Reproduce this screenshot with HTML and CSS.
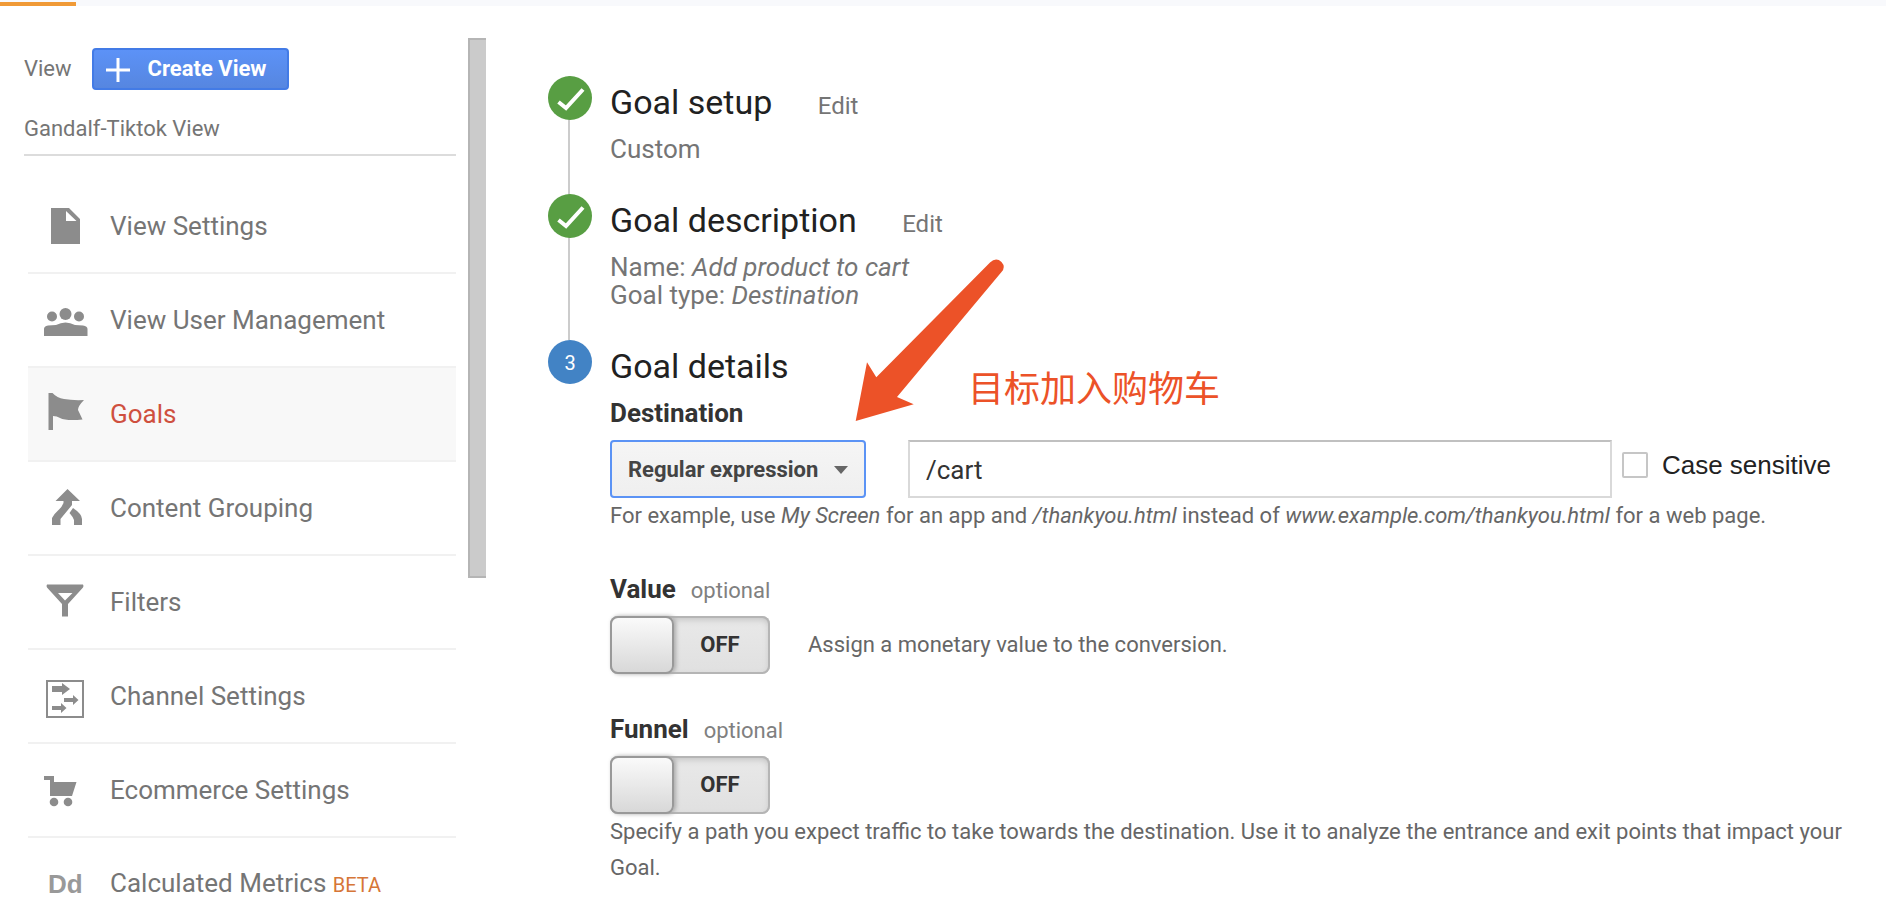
FILE: index.html
```html
<!DOCTYPE html>
<html lang="en">
<head>
<meta charset="utf-8">
<title>Goal settings</title>
<link rel="stylesheet" href="styles.css">
</head>
<body>
<div class="topbar"><div class="topbar-active"></div></div>
<div class="page">
  <aside class="sidebar">
    <div class="view-head">
      <span>View</span>
      <button class="create" type="button">
        <svg class="plus" viewBox="0 0 24 24" aria-hidden="true"><path d="M12 0v24M0 12h24"/></svg>
        Create View
      </button>
    </div>
    <div class="view-name">Gandalf-Tiktok View</div>
    <nav class="menu">
      <a class="item" href="#"><svg class="icon" viewBox="0 0 48 48"><path fill-rule="evenodd" d="M11 6H29L40 17V42H11ZM26 9V19H36.500Z"/></svg>View Settings</a>
      <a class="item" href="#"><svg class="icon" viewBox="0 0 48 48"><circle cx="12" cy="20.500" r="5"/><circle cx="25.500" cy="18" r="6"/><circle cx="39" cy="20.500" r="5"/><path d="M4 40V33Q4 30 8 29.500L16 29Q25.500 24 35 29L43 29.500Q47.500 30 47.500 33V40Z"/></svg>View User Management</a>
      <a class="item current" href="#"><svg class="icon" viewBox="0 0 48 48"><path d="M8.500 3H12.500Q17 8 24 9Q32 10.500 44 10Q38 16 38 20Q40 24 42.500 29.500Q26 31 20 28Q17 26 13 26V40H8.500Z"/></svg>Goals</a>
      <a class="item" href="#"><svg class="icon" viewBox="0 0 48 48"><path d="M27.500 5L40 17H32V21L20.500 35V41H12V34Q14 30 18 26.500Q22 23 23.500 19V17H15.500Z"/><path d="M33 24Q42 30 42 35V41H34V36Q33 33 29.500 29Z"/></svg>Content Grouping</a>
      <a class="item" href="#"><svg class="icon" viewBox="0 0 48 48"><path fill-rule="evenodd" d="M7 6.500H43Q44 8 43 9.500L28 26V38.500H22V26L7 9.500Q6 8 7 6.500ZM18 15L25 22.500L32.500 15Z"/></svg>Filters</a>
      <a class="item" href="#"><svg class="icon" viewBox="0 0 48 48"><path fill-rule="evenodd" d="M6 8H44V46H6ZM8 10V44H42V10Z"/><path d="M12 14H22V11L30 17L22 23V20H12ZM24 26H33V23L38.500 28L33 33V30H24ZM12 34H21V31L26.500 36L21 41V38H12Z"/></svg>Channel Settings</a>
      <a class="item" href="#"><svg class="icon" viewBox="0 0 48 48"><path d="M4 10H14V16H36.500L32 30H10V14H4Z"/><circle cx="14" cy="36" r="4.300"/><circle cx="28" cy="36" r="4.300"/></svg>Ecommerce Settings</a>
      <a class="item" href="#"><span class="icon dd">Dd</span><span>Calculated Metrics <span class="beta">BETA</span></span></a>
    </nav>
  </aside>
  <div class="scrollbar"></div>

  <main class="main">
    <section class="step">
      <div class="rail"><span class="badge"><svg viewBox="0 0 44 44" aria-label="Done"><path d="M10.500 26L18 32L35 13.500"/></svg></span></div>
      <div class="body">
        <h2>Goal setup <a class="edit" href="#">Edit</a></h2>
        <p class="summary">Custom</p>
      </div>
    </section>
    <section class="step">
      <div class="rail"><span class="badge"><svg viewBox="0 0 44 44" aria-label="Done"><path d="M10.500 26L18 32L35 13.500"/></svg></span></div>
      <div class="body">
        <h2>Goal description <a class="edit" href="#">Edit</a></h2>
        <p class="summary">Name: <i>Add product to cart</i><br>Goal type: <i>Destination</i></p>
      </div>
    </section>
    <section class="step">
      <div class="rail last"><span class="badge active">3</span></div>
      <div class="body">
        <h2>Goal details</h2>
        <div class="field">
          <label class="title" for="match">Destination</label>
          <div class="row">
            <div class="picker">
              <select id="match"><option>Regular expression</option><option>Equals to</option><option>Begins with</option></select>
              <svg class="caret" viewBox="0 0 14 8" aria-hidden="true"><path d="M0 0H14L7 8Z"/></svg>
            </div>
            <input class="url" type="text" value="/cart" aria-label="Destination">
            <label class="case"><input type="checkbox">Case sensitive</label>
          </div>
          <p class="help">For example, use <i>My Screen</i> for an app and <i>/thankyou.html</i> instead of <i>www.example.com/thankyou.html</i> for a web page.</p>
        </div>
        <div class="field">
          <label class="title" for="value">Value<span class="optional">optional</span></label>
          <div class="row">
            <label class="toggle"><input id="value" type="checkbox"><span>OFF</span></label>
            <span class="note">Assign a monetary value to the conversion.</span>
          </div>
        </div>
        <div class="field">
          <label class="title" for="funnel">Funnel<span class="optional">optional</span></label>
          <div class="row">
            <label class="toggle"><input id="funnel" type="checkbox"><span>OFF</span></label>
          </div>
          <p class="help">Specify a path you expect traffic to take towards the destination. Use it to analyze the entrance and exit points that impact your Goal.</p>
        </div>
      </div>
    </section>
    <svg class="arrow" viewBox="0 0 150 164" aria-hidden="true"><path d="M0.700 163L12 104.300L21.300 119.300L135 4.500Q141 -1 146.500 4Q151 9 146.500 14L42 139L58.700 146.300Z"/></svg>
    <div class="callout" lang="zh">目标加入购物车</div>
  </main>
</div>
</body>
</html>
```
FILE: styles.css
```css
* { box-sizing: border-box; }
body {
  margin: 0;
  background: #fff;
  color: #757575;
  font-family: Roboto, "Noto Sans CJK SC", sans-serif;
  font-size: 26px;
  line-height: 28px;
}
a { color: inherit; text-decoration: none; }
h2, p { margin: 0; }
button, input, select { font-family: inherit; }

.topbar { height: 6px; padding-top: 2px; background: #f8f9fc; }
.topbar-active { width: 76px; height: 4px; background: #f09a37; }

.page { display: flex; align-items: flex-start; }

.sidebar { width: 456px; flex: none; padding: 42px 0 0 24px; font-size: 22px; }
.view-head { display: flex; align-items: center; gap: 20px; }
.create {
  display: flex;
  align-items: center;
  gap: 18px;
  height: 42px;
  padding: 0 20px 2px 12px;
  border: 2px solid #437be6;
  border-radius: 4px;
  background: linear-gradient(#5c92f7, #5686e0);
  color: #fff;
  font-size: 22px;
  font-weight: 700;
}
.plus { width: 24px; height: 24px; margin-top: 4px; fill: none; stroke: #fff; stroke-width: 3; }
.view-name { height: 66px; padding-top: 25px; border-bottom: 2px solid #dcdcdc; }
.menu { margin: 24px 0 0 4px; font-size: 26px; }
.item {
  display: flex;
  align-items: center;
  gap: 22px;
  height: 94px;
  padding-left: 12px;
  border-bottom: 2px solid #f1f1f1;
}
.item:last-child { border-bottom: 0; height: 92px; }
.current { background: #f8f8f8; color: #cf503f; }
.icon { width: 48px; height: 48px; flex: none; fill: #8c8c8c; }
.dd {
  padding-left: 8px;
  line-height: 48px;
  color: #999;
  font-family: "Liberation Sans", sans-serif;
  font-weight: 700;
}
.beta { color: #d67638; font-size: 20px; }

.scrollbar {
  width: 18px;
  height: 540px;
  flex: none;
  margin: 32px 0 0 12px;
  background: #cbcbcb;
  border: 2px solid #b5b5b5;
  border-right: 0;
}

.main { position: relative; flex: 1; min-width: 0; padding: 70px 36px 0 62px; }
.step { display: flex; gap: 18px; }
.rail {
  width: 44px;
  flex: none;
  background: linear-gradient(#ccc, #ccc) 20px 0 / 2px 100% no-repeat;
}
.last { background: none; }
.badge {
  display: block;
  width: 44px;
  height: 44px;
  border-radius: 50%;
  background: #589e43;
}
.badge svg { display: block; fill: none; stroke: #fff; stroke-width: 4; }
.active { background: #4283c5; color: #fff; font-size: 20px; line-height: 46px; text-align: center; }
.body { flex: 1; min-width: 0; padding-bottom: 31px; }
h2 { margin-bottom: 7px; color: #212121; font-size: 34px; font-weight: 400; line-height: 52px; }
.edit { margin-left: 37px; color: #757575; font-size: 24px; line-height: 28px; }

.field { margin-bottom: 41px; }
.title { display: block; margin-bottom: 13px; color: #333; font-weight: 700; }
.optional { margin-left: 15px; color: #808080; font-size: 22px; font-weight: 400; line-height: 22px; }
.row { display: flex; align-items: center; }
.picker { position: relative; flex: none; margin-right: 42px; }
.picker select {
  display: block;
  width: 256px;
  height: 58px;
  padding: 0 16px;
  border: 2px solid #5b93f5;
  border-radius: 4px;
  background: linear-gradient(#f5f5f5, #efefef);
  color: #444;
  font-size: 22px;
  font-weight: 700;
  appearance: none;
  outline: 0;
}
.caret { position: absolute; top: 26px; right: 18px; width: 14px; height: 8px; fill: #666; pointer-events: none; }
.url {
  flex: 1;
  min-width: 0;
  height: 58px;
  padding: 2px 16px 0;
  border: 2px solid #d9d9d9;
  border-top-color: #c0c0c0;
  color: #333;
  font-size: 26px;
}
.case {
  display: flex;
  align-items: center;
  gap: 14px;
  margin: 0 19px 8px 10px;
  color: #222;
  font-family: "Liberation Sans", Arial, sans-serif;
}
.case input {
  width: 26px;
  height: 26px;
  margin: 0;
  border: 2px solid #c6c6c6;
  border-radius: 2px;
  background: #fff;
  appearance: none;
}
.help, .note { color: #666; font-size: 22px; line-height: 36px; }
.toggle {
  display: flex;
  width: 160px;
  height: 58px;
  flex: none;
  border-radius: 8px;
  background: linear-gradient(#e9e9e9, #e0e0e0);
  box-shadow: inset 0 0 0 2px #b5b5b5, inset 0 3px 6px 1px #c4c4c4;
  color: #333;
  font-size: 22px;
  font-weight: 700;
}
.toggle input {
  width: 64px;
  height: 58px;
  margin: 0;
  border: 2px solid #999;
  border-radius: 8px;
  background: linear-gradient(#fafafa, #d8d8d8);
  box-shadow: 2px 0 4px #aaa;
  appearance: none;
}
.toggle span { flex: 1; padding-right: 4px; line-height: 58px; text-align: center; }
.note { margin-left: 38px; }

.arrow { position: absolute; top: 252px; left: 369px; width: 150px; height: 164px; fill: #ec5228; }
.callout {
  position: absolute;
  top: 353px;
  left: 482px;
  color: #ec5228;
  font-family: "Noto Sans CJK SC", sans-serif;
  font-size: 36px;
  font-weight: 400;
  line-height: 54px;
  white-space: nowrap;
}
```
